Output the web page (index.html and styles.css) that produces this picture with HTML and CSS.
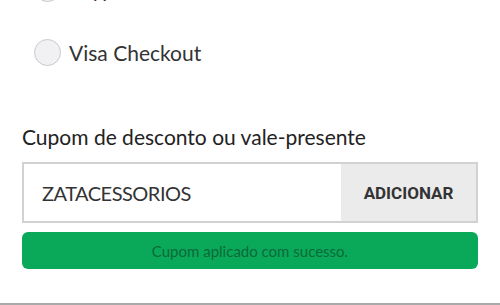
FILE: index.html
```html
<!DOCTYPE html>
<html lang="pt-BR">
<head>
<meta charset="utf-8">
<link rel="stylesheet" href="styles.css">
</head>
<body>
<div class="page">
  <ul class="methods">
    <li class="method"><span class="radio"></span><span class="method-label">Paypal</span></li>
    <li class="method"><span class="radio"></span><span class="method-label">Visa Checkout</span></li>
  </ul>
  <section class="coupon">
    <label class="coupon-title">Cupom de desconto ou vale-presente</label>
    <div class="coupon-field">
      <span class="coupon-code">ZATACESSORIOS</span>
      <button class="coupon-add">ADICIONAR</button>
    </div>
    <div class="coupon-success">Cupom aplicado com sucesso.</div>
  </section>
</div>
</body>
</html>
```
FILE: styles.css
```css
* { box-sizing: border-box; }
html, body { margin: 0; padding: 0; background: #fff; }
body {
  width: 500px;
  height: 305px;
  overflow: hidden;
  font-family: Lato, "Noto Sans", sans-serif;
  color: #333;
}
.page {
  display: flow-root;
  height: 305px;
  border-bottom: 2px solid #aaa;
  padding: 0 22px;
}
.methods {
  list-style: none;
  margin: -25px 0 0 0;
  padding: 0 0 0 12px;
  display: flex;
  flex-direction: column;
  gap: 37px;
}
.method {
  display: flex;
  align-items: center;
  gap: 8px;
  height: 27px;
}
.radio {
  width: 27px;
  height: 27px;
  border-radius: 50%;
  border: 1.5px solid #c9c9cd;
  background: #f1f1f3;
  flex: none;
}
.method-label {
  font-size: 21px;
  color: #333;
}
.coupon {
  margin-top: 58px;
}
.coupon-title {
  display: block;
  font-size: 21px;
  line-height: 26px;
  color: #222;
}
.coupon-field {
  margin-top: 12px;
  display: flex;
  height: 61px;
  border: 2px solid #d2d2d2;
}
.coupon-code {
  flex: 1;
  display: flex;
  align-items: center;
  padding-left: 18px;
  font-size: 20px;
  letter-spacing: -0.5px;
  color: #333;
  background: #fff;
}
.coupon-add {
  width: 135px;
  border: none;
  background: #ebebeb;
  font-family: Roboto, sans-serif;
  font-weight: 700;
  font-size: 17px;
  color: #333;
  padding: 0;
}
.coupon-success {
  margin-top: 9px;
  height: 37px;
  border-radius: 6px;
  background: #0aa95a;
  color: #0b6a37;
  font-size: 15px;
  display: flex;
  align-items: center;
  justify-content: center;
}
```
